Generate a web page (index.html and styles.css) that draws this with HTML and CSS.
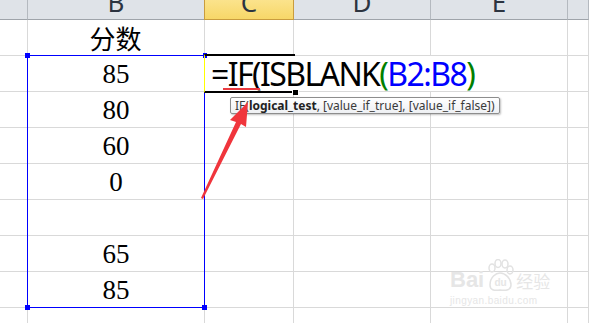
FILE: index.html
```html
<!DOCTYPE html>
<html lang="zh-CN">
<head>
	<meta charset="UTF-8">
	<title>IF ISBLANK</title>
	<link rel="stylesheet" href="styles.css">
</head>
<body>
	<div class="sheet">
		<div class="hd"></div>
		<div class="hd">B</div>
		<div class="hd hd-on">C</div>
		<div class="hd">D</div>
		<div class="hd">E</div>
		<div class="hd"></div>

		<div class="cell"></div>
		<div class="cell num cn">分数</div>
		<div class="cell"></div>
		<div class="cell"></div>
		<div class="cell"></div>
		<div class="cell"></div>

		<div class="cell"></div>
		<div class="cell num">85</div>
		<div class="cell formula">=IF(ISBLANK<span class="g">(</span><span class="b">B2:B8</span><span class="g">)</span></div>
		<div class="cell"></div>

		<div class="cell"></div>
		<div class="cell num">80</div>
		<div class="cell"></div>
		<div class="cell"></div>
		<div class="cell"></div>
		<div class="cell"></div>

		<div class="cell"></div>
		<div class="cell num">60</div>
		<div class="cell"></div>
		<div class="cell"></div>
		<div class="cell"></div>
		<div class="cell"></div>

		<div class="cell"></div>
		<div class="cell num">0</div>
		<div class="cell"></div>
		<div class="cell"></div>
		<div class="cell"></div>
		<div class="cell"></div>

		<div class="cell"></div>
		<div class="cell num"></div>
		<div class="cell"></div>
		<div class="cell"></div>
		<div class="cell"></div>
		<div class="cell"></div>

		<div class="cell"></div>
		<div class="cell num">65</div>
		<div class="cell"></div>
		<div class="cell"></div>
		<div class="cell"></div>
		<div class="cell"></div>

		<div class="cell"></div>
		<div class="cell num">85</div>
		<div class="cell"></div>
		<div class="cell"></div>
		<div class="cell"></div>
		<div class="cell"></div>

		<div class="cell"></div>
		<div class="cell"></div>
		<div class="cell"></div>
		<div class="cell"></div>
		<div class="cell"></div>
		<div class="cell"></div>
	</div>

	<!-- selection B2:B8 -->
	<div class="range">
		<i class="knob k-tl"></i>
		<i class="knob k-tr"></i>
		<i class="knob k-bl"></i>
		<i class="knob k-br"></i>
	</div>

	<!-- active cell C2 -->
	<div class="active"><i class="fill"></i></div>
	<div class="squiggle"></div>

	<div class="tip">IF(<b>logical_test</b>, [value_if_true], [value_if_false])</div>

	<svg class="arrow" width="70" height="110" viewBox="195 95 70 110">
		<polygon points="201,198 236,122 230,120 248,102 246,127 241,124 203,199" fill="#f0353c"/>
	</svg>

	<div class="mark">
		<div class="mark-top">
			<span class="mark-bai">Bai</span>
			<svg class="paw" width="30" height="34" viewBox="0 0 30 34">
				<g fill="none" stroke="#e2e2e2" stroke-width="1.5">
					<ellipse cx="7" cy="9" rx="3" ry="4"/>
					<ellipse cx="13" cy="4.5" rx="3" ry="4"/>
					<ellipse cx="20" cy="5" rx="3" ry="4"/>
					<ellipse cx="25" cy="11" rx="3" ry="4"/>
					<path d="M5 26 C5 18 11 14 15 14 C20 14 26 19 26 26 C26 31 21 32 15 31 C9 32 5 31 5 26 Z"/>
				</g>
				<text x="15.5" y="27" text-anchor="middle" font-family="Liberation Sans, sans-serif" font-size="10" font-weight="bold" fill="#e6e6e6">du</text>
			</svg>
			<span class="mark-cn">经验</span>
		</div>
		<div class="mark-url">jingyan.baidu.com</div>
	</div>
</body>
</html>
```

FILE: styles.css
```css
html, body {
	margin: 0;
	padding: 0;
	background: #fff;
	overflow: hidden;
}
body {
	width: 589px;
	height: 323px;
	position: relative;
}
.sheet {
	display: grid;
	height: 323px;
	overflow: hidden;
	grid-template-columns: 28px 177px 89px 137px 137px 1fr;
	grid-template-rows: 20px repeat(8, 36px) 1fr;
}
.hd {
	box-sizing: border-box;
	height: 20px;
	background: #dfe3e8;
	border-right: 1px solid #b4b9bf;
	border-bottom: 1px solid #9fa4aa;
	font-family: "Noto Sans", sans-serif;
	font-size: 26px;
	line-height: 5px;
	color: #2c3440;
	text-align: center;
	overflow: hidden;
}
.hd-on {
	background: linear-gradient(#fbe38c, #f7d768);
	border-left: 1px solid #c99c3e;
	border-right: 1px solid #c99c3e;
	border-bottom: 1px solid #c99c3e;
	margin-left: -1px;
}
.cell {
	box-sizing: border-box;
	border-right: 1px solid #d9d9d9;
	border-bottom: 1px solid #d9d9d9;
	min-height: 36px;
}
.num {
	font-family: "Liberation Serif", serif;
	font-size: 27px;
	line-height: 36px;
	text-align: center;
	color: #000;
}
.cn {
	font-family: "Noto Sans CJK SC", sans-serif;
	font-size: 26px;
	line-height: 35px;
	padding-right: 1px;
}
.formula {
	grid-column: span 3;
	font-family: "Noto Sans", sans-serif;
	font-size: 32px;
	letter-spacing: -1.6px;
	line-height: 36px;
	padding-left: 6px;
	color: #000;
	white-space: nowrap;
}
.formula .g {
	color: #008000;
}
.formula .b {
	color: #0000ff;
}
.range {
	position: absolute;
	left: 27px;
	top: 55px;
	width: 176px;
	height: 251px;
	border: 1px solid #0000ff;
}
.knob {
	position: absolute;
	width: 5px;
	height: 5px;
	background: #0000ff;
}
.k-tl { left: -3px; top: -3px; }
.k-tr { right: -3px; top: -3px; width: 4px; }
.k-bl { left: -3px; bottom: -3px; }
.k-br { right: -3px; bottom: -3px; }
.active {
	position: absolute;
	left: 204px;
	top: 54px;
	width: 90px;
	height: 35px;
	border-top: 2px solid #000;
	border-bottom: 2px solid #000;
	border-left: 1px solid #ffff00;
}
.fill {
	position: absolute;
	right: -4px;
	bottom: -4px;
	width: 5px;
	height: 5px;
	background: #000;
	border: 1px solid #fff;
	border-bottom: 0;
}
.squiggle {
	position: absolute;
	left: 223px;
	top: 88px;
	width: 37px;
	height: 2px;
	background: #ea3a40;
}
.tip {
	position: absolute;
	left: 230px;
	top: 97px;
	box-sizing: border-box;
	height: 17px;
	padding: 0 4px;
	border: 1px solid #8d8d8d;
	border-radius: 2px;
	background: linear-gradient(#ffffff, #eef0f3);
	box-shadow: 1px 1px 2px rgba(0, 0, 0, 0.25);
	font-family: "Noto Sans", sans-serif;
	font-size: 12px;
	line-height: 15px;
	color: #3a3a3a;
	white-space: nowrap;
}
.tip b {
	font-weight: bold;
	color: #222;
}
.arrow {
	position: absolute;
	left: 195px;
	top: 95px;
}
.mark {
	position: absolute;
	left: 450px;
	top: 257px;
	color: #e6e6e6;
	font-family: "Liberation Sans", sans-serif;
}
.mark-top {
	display: flex;
	align-items: flex-end;
	gap: 1px;
	height: 36px;
}
.mark-bai {
	font-size: 22px;
	font-weight: bold;
	line-height: 22px;
	margin-bottom: 2px;
}
.mark-cn {
	font-family: "Noto Sans CJK SC", sans-serif;
	font-size: 17px;
	line-height: 20px;
	margin-bottom: 2px;
}
.mark-url {
	font-size: 10px;
	line-height: 10px;
	letter-spacing: 0.4px;
	margin-top: 3px;
}
```
